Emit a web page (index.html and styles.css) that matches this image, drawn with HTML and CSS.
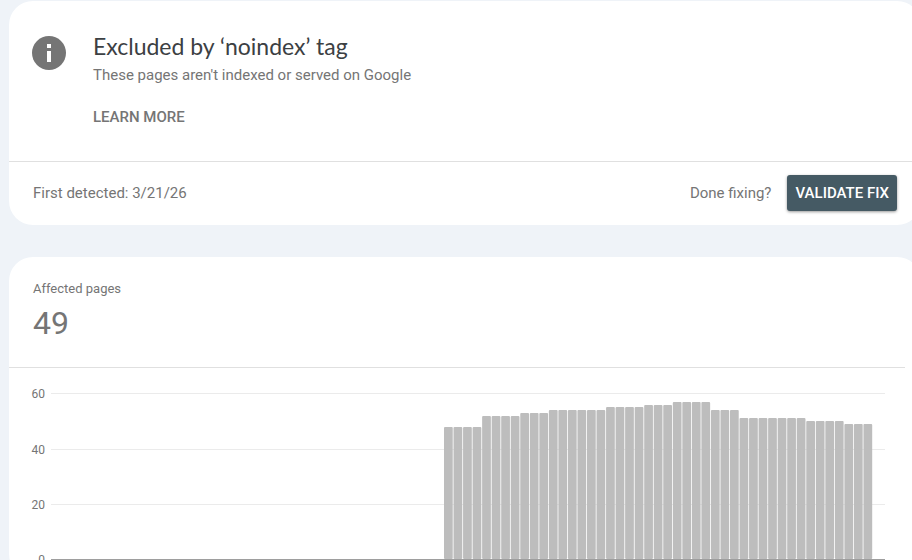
FILE: index.html
```html
<!DOCTYPE html>
<html lang="en">

<head>
    <meta charset="UTF-8">
    <meta name="viewport" content="width=device-width, initial-scale=1.0">
    <title>Excluded by ‘noindex’ tag</title>
    <link rel="stylesheet" href="styles.css">
</head>

<body>
    <main class="report">
        <section class="card">
            <div class="issue">
                <svg class="issue-icon" viewBox="0 0 34 34" aria-hidden="true">
                    <circle cx="17" cy="17" r="17" fill="#757575" />
                    <path d="M15 8h4v4h-4zM15 15h4v11h-4z" fill="#fff" />
                </svg>
                <div class="issue-text">
                    <h1>Excluded by ‘noindex’ tag</h1>
                    <p>These pages aren't indexed or served on Google</p>
                    <a class="learn-more" href="#">LEARN MORE</a>
                </div>
            </div>
            <div class="validation">
                <span>First detected: 3/21/26</span>
                <div class="validation-action">
                    <span>Done fixing?</span>
                    <button class="validate-btn" type="button">VALIDATE FIX</button>
                </div>
            </div>
        </section>

        <section class="card">
            <div class="summary">
                <h2>Affected pages</h2>
                <div class="count">49</div>
            </div>
            <svg class="chart" id="chart" viewBox="0 0 912 210" role="img" aria-label="Affected pages over time"></svg>
        </section>
    </main>
    <script src="chart.js"></script>
</body>

</html>
```
FILE: styles.css
```css
html {
    overflow: hidden;
}

body {
    margin: 0;
    background-color: #eff3f8;
    color: #757575;
    font-family: Roboto, Arial, sans-serif;
    font-size: 15px;
    line-height: 20px;
}

.report {
    display: flex;
    flex-direction: column;
    gap: 32px;
    margin: 1px -9px 0 9px;
}

.card {
    background-color: #fff;
    border-radius: 24px;
}

.issue {
    display: flex;
    gap: 27px;
    padding: 32px 24px 32px 23px;
    border-bottom: 1px solid #e0e0e0;
}

.issue-icon {
    width: 34px;
    height: 34px;
    margin-top: 3px;
}

.issue-text h1 {
    margin: 0;
    color: #3c4043;
    font-family: "Google Sans", Lato, sans-serif;
    font-size: 23px;
    font-weight: 400;
    line-height: 26px;
}

.issue-text p {
    margin: 6px 0 20px;
}

.learn-more {
    display: block;
    color: #757575;
    font-size: 15px;
    font-weight: 500;
    line-height: 24px;
    text-decoration: none;
}

.validation {
    display: flex;
    align-items: center;
    justify-content: space-between;
    padding: 13px 24px 14px;
}

.validation-action {
    display: flex;
    align-items: center;
    gap: 16px;
}

.validate-btn {
    height: 36px;
    padding: 0 8px;
    border: none;
    border-radius: 3px;
    background-color: #455a64;
    box-shadow: 0 1px 3px rgba(0, 0, 0, 0.4);
    color: #fff;
    font: 500 15px Roboto, Arial, sans-serif;
    cursor: pointer;
}

.summary {
    margin-right: 16px;
    padding: 22px 24px 24px;
    border-bottom: 1px solid #e0e0e0;
}

.summary h2 {
    margin: 0;
    font-size: 13px;
    font-weight: 400;
    line-height: 20px;
}

.count {
    margin-top: 4px;
    font-size: 32px;
    line-height: 40px;
}

.chart {
    display: block;
    width: 100%;
}

.chart .grid {
    stroke: #ebebeb;
}

.chart .axis {
    stroke: #9e9e9e;
}

.chart .bar {
    fill: #bdbdbd;
}

.chart text {
    fill: #757575;
    font-size: 12px;
    text-anchor: end;
}
```
FILE: chart.js
```js
const runs = [[48, 4], [52, 4], [53, 3], [54, 6], [55, 4], [56, 3], [57, 4], [54, 3], [51, 7], [50, 4], [49, 3]];
const values = runs.flatMap(([value, days]) => Array(days).fill(value));

const left = 42;
const right = 876;
const base = 191;
const barsLeft = 435;
const barsRight = 864;
const height = 166; // 0 to 60 pages

const yFor = value => Math.ceil(base - value * height / 60);
const step = (barsRight - barsLeft) / values.length;

let lines = '';
let labels = '';
for (const tick of [60, 40, 20, 0]) {
    const y = yFor(tick);
    lines += `<path class="${tick ? 'grid' : 'axis'}" d="M${left} ${y + 0.5}H${right}"/>`;
    labels += `<text x="36" y="${y + 5}">${tick}</text>`;
}

const bars = values.map((value, i) =>
    `<rect class="bar" x="${barsLeft + i * step}" y="${yFor(value)}" width="${step - 0.8}" height="${base - yFor(value)}" rx="1"/>`
).join('');

document.getElementById('chart').innerHTML = lines + bars + labels;
```
